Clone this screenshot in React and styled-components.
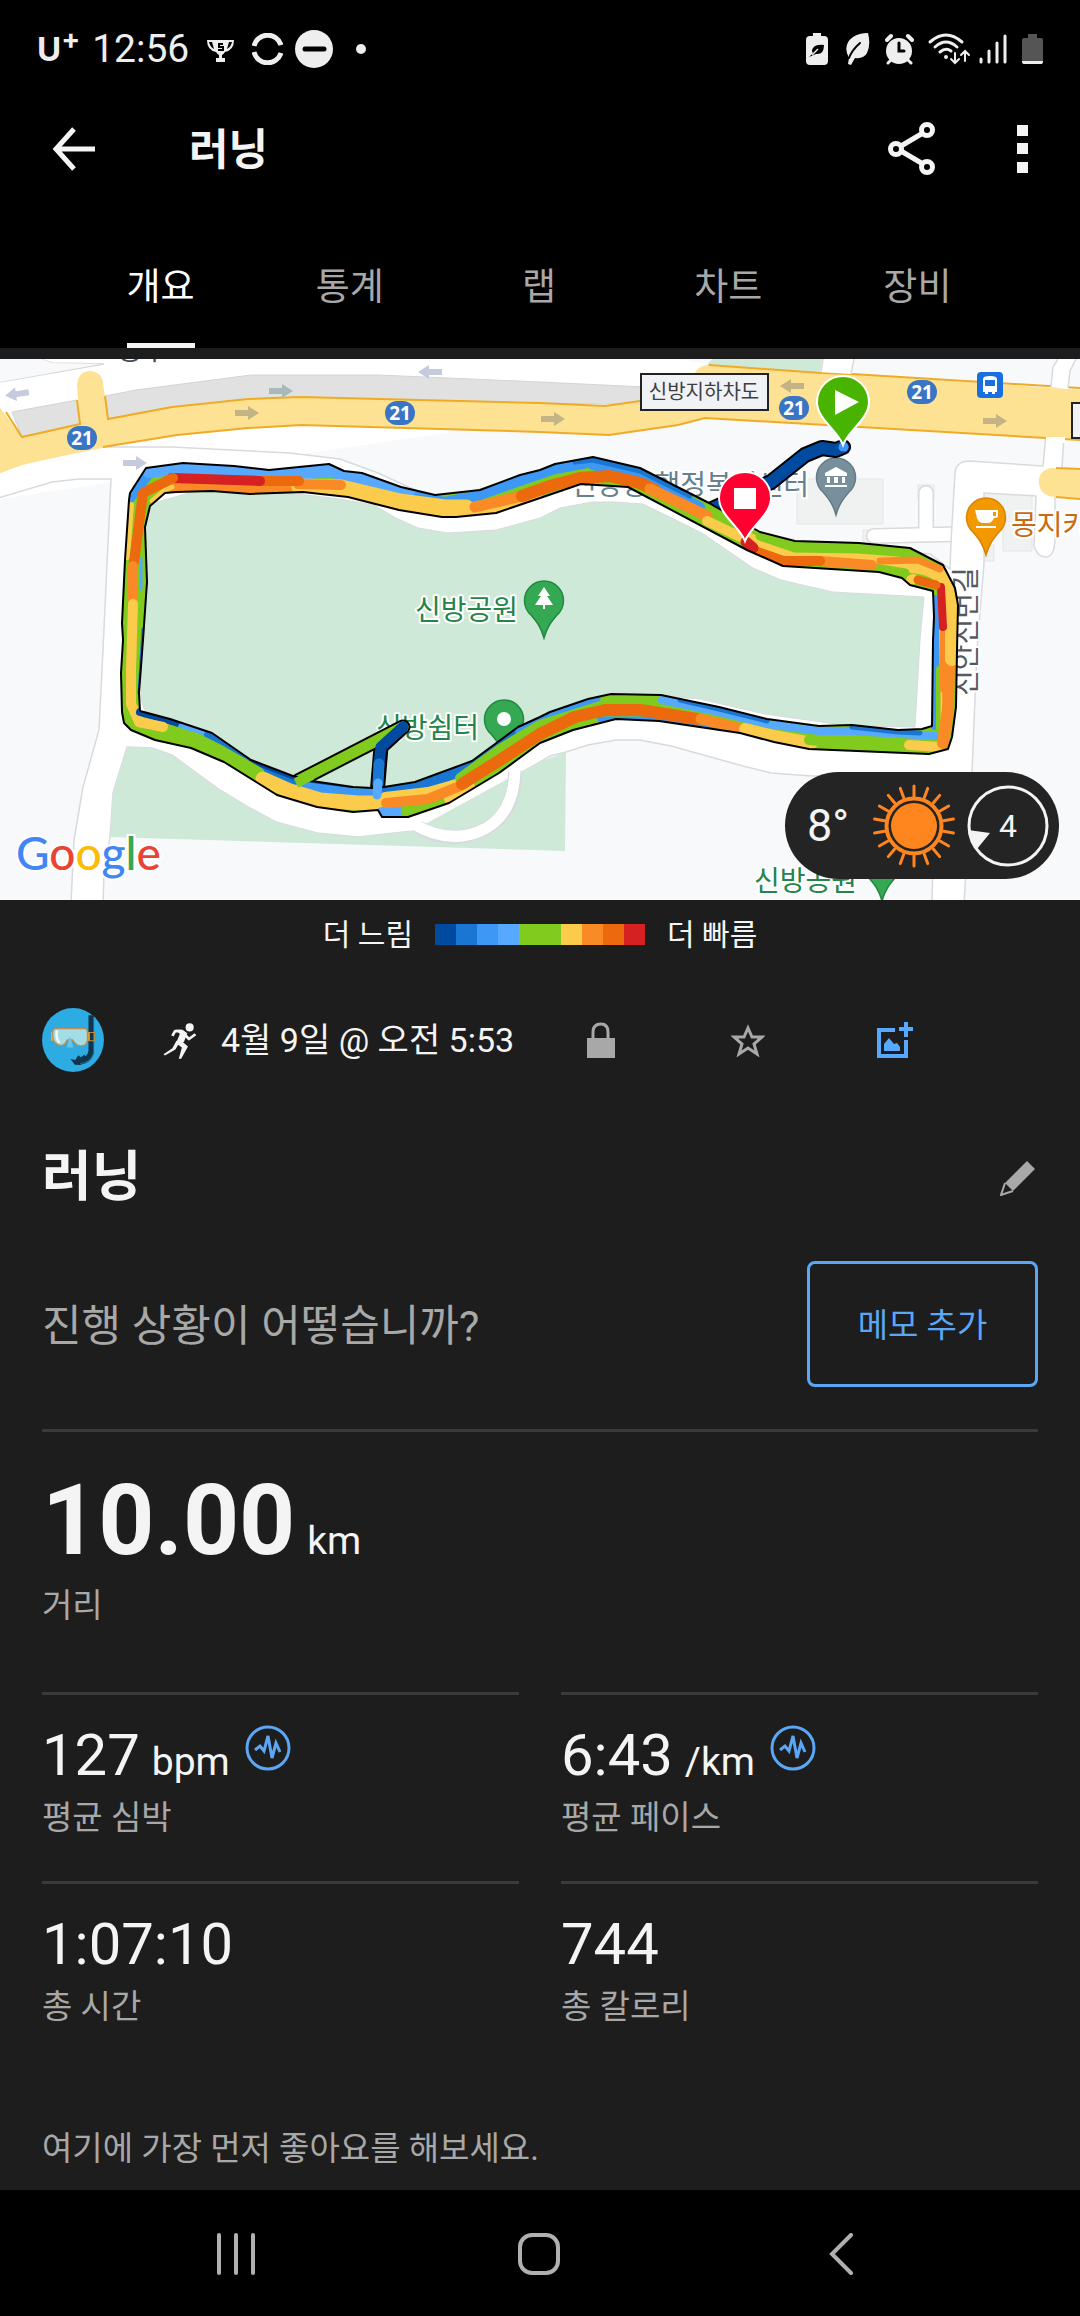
import React, { useState } from "react";
import styled, { createGlobalStyle } from "styled-components";

const PACE = {
   navy: "#004a9f",
   blue: "#1976d2",
   azure: "#3d97f4",
   sky: "#56a9ff",
   green: "#81ca1e",
   yellow: "#fbcb4c",
   orange: "#fa8a26",
   amber: "#ec690d",
   red: "#d52121",
};

const LEGEND = ["navy", "blue", "azure", "sky", "green", "green", "yellow", "orange", "amber", "red"];

const TABS = ["개요", "통계", "랩", "차트", "장비"];

const STATS = [
   { value: "127", unit: "bpm", label: "평균 심박", chart: true },
   { value: "6:43", unit: "/km", label: "평균 페이스", chart: true },
   { value: "1:07:10", label: "총 시간" },
   { value: "744", label: "총 칼로리" },
];

/* ---------- map data ---------- */

const OUTER =
   "M130 134 146 109 183 104 234 107 269 111 329 105 344 112 362 114 401 128 435 136 480 131 520 116 540 111 555 105 593 98 640 109 709 144 760 173 795 182 859 184 910 189 943 206 955 229 958 246 957 291 956 348 952 378 948 390 929 395 809 390 774 383 740 374 659 362 616 360 573 371 540 384 499 414 449 444 408 458 382 458 378 451 353 453 317 448 277 436 224 403 191 389 155 381 131 371 124 364 122 353 121 314 123 281 122 264 125 201 129 141Z";
const INNER =
   "M165 134 150 147 145 168 147 223 143 281 139 334 140 352 170 360 212 374 251 401 293 417 312 422 353 428 372 429 384 428 415 423 472 402 518 368 540 358 550 353 588 340 611 335 661 336 719 348 767 360 819 367 852 366 898 371 922 370 932 367 933 281 934 258 933 232 910 226 902 219 879 213 783 207 747 191 628 128 581 125 540 139 496 154 456 158 442 158 399 151 348 138 303 133 250 135 212 132 176 133Z";

// [pace, width, points], painted in order
const SEGMENTS = [
   ["azure", 12, "128 140 149 113"],
   ["sky", 14, "149 112 183 108 234 111 269 117 330 111 362 120 401 135 435 142"],
   ["azure", 10, "418 138 445 143 480 136 520 122 555 110 593 103"],
   ["azure", 10, "593 106 640 116 700 148"],
   ["blue", 5, "575 103 593 101 640 112 690 137"],
   ["orange", 14, "172 130 212 127 250 130 297 129"],
   ["yellow", 5, "152 142 165 131 172 128"],
   ["yellow", 17, "300 128 341 129 400 143 445 149 466 149"],
   ["yellow", 5, "456 156 496 151 540 137"],
   ["yellow", 6, "131 146 127 198"],
   ["orange", 10, "298 125 341 126"],
   ["amber", 10, "260 122 299 122"],
   ["red", 10, "172 119 260 122"],
   ["amber", 10, "173 119 143 134 139 165 134 203"],
   ["orange", 10, "133 207 133 240"],
   ["yellow", 10, "133 245 131 310 131 345 139 363 165 368"],
   ["orange", 11, "475 148 522 137"],
   ["amber", 12, "522 137 550 127 580 119 610 117 640 124 655 131"],
   ["orange", 11, "650 130 680 144 707 157"],
   ["yellow", 10, "707 162 745 180"],
   ["yellow", 11, "745 178 795 195"],
   ["sky", 3, "141 200 141 230"],
   ["blue", 3, "143 270 139 334"],
   ["navy", 8, "140 353 175 363 190 368"],
   ["sky", 8, "182 368 212 378"],
   ["blue", 8, "208 376 250 405 300 424"],
   ["navy", 5, "251 402 293 418 350 429"],
   ["azure", 9, "300 427 355 434 380 433"],
   ["green", 14, "150 374 169 373 196 381 220 393 258 415"],
   ["yellow", 10, "139 363 163 368"],
   ["yellow", 15, "263 420 290 432 320 441 358 444 385 444"],
   ["blue", 12, "386 432 415 428 472 407 515 374"],
   ["azure", 10, "520 371 550 357 600 340"],
   ["yellow", 8, "385 437 428 432 460 423"],
   ["sky", 12, "382 454 400 453"],
   ["green", 12, "407 452 449 440"],
   ["yellow", 10, "449 440 470 428"],
   ["orange", 10, "386 444 428 440 460 427"],
   ["green", 10, "460 419 500 390 540 366 600 347"],
   ["green", 12, "606 341 656 342"],
   ["sky", 8, "662 341 719 353 767 365 819 372 852 372 935 377"],
   ["blue", 5, "680 341 719 350 767 362"],
   ["blue", 5, "852 368 898 373 920 374"],
   ["azure", 5, "600 360 659 360 720 371"],
   ["amber", 12, "462 425 500 401 540 375 575 358 605 351 640 351 697 360"],
   ["orange", 11, "701 360 742 370"],
   ["yellow", 12, "745 370 774 377 812 384"],
   ["green", 10, "809 381 850 384 905 388"],
   ["azure", 8, "935 367 935 240"],
   ["green", 6, "939 370 939 310"],
   ["yellow", 5, "943 380 943 330 941 240"],
   ["yellow", 10, "909 386 940 388"],
   ["orange", 12, "943 384 948 350 949 302"],
   ["orange", 8, "944 330 944 270"],
   ["yellow", 14, "952 300 952 250 946 228 938 214 905 202 840 197 800 196"],
   ["yellow", 9, "884 206 930 212 945 226"],
   ["red", 8, "941 228 943 268"],
   ["green", 9, "760 177 795 189 859 190 910 194 930 204"],
   ["orange", 7, "880 202 918 201 940 210"],
   ["green", 9, "874 209 905 214"],
   ["yellow", 10, "911 221 913 220"],
   ["amber", 9, "918 221 936 226"],
   ["orange", 10, "820 202 872 206"],
   ["amber", 10, "749 190 783 202 820 202"],
   ["red", 11, "746 183 753 189"],
];

const ROUTE_BADGES = [[82, 79], [400, 54], [794, 49], [922, 33]];

// [x, y, rotation, colour]
const ROAD_ARROWS = [
   [17, 35, 172, "#c5cbdd"],
   [281, 32, 0, "#a7bab9"],
   [247, 54, 0, "#c3b385"],
   [430, 13, 180, "#c5cbdd"],
   [135, 104, 0, "#c5cbdd"],
   [553, 60, 0, "#c3b385"],
   [792, 27, 180, "#c3b385"],
   [995, 62, 0, "#c3b385"],
];

const Pin = ({ x, y, fill, edge, children }) => (
   <g transform={`translate(${x} ${y})`}>
      <path
         d="M0 38C-3 27-7 22-13 15A19.500 19.500 0 1 1 13 15C7 22 3 27 0 38Z"
         fill={fill}
         stroke={edge}
         strokeWidth="1.500"
      />
      {children}
   </g>
);

const FlagPin = ({ x, y, fill, children }) => (
   <g transform={`translate(${x} ${y})`}>
      <path
         d="M0 43C-5 29-26 17-26 0A26 26 0 1 1 26 0C26 17 5 29 0 43Z"
         fill={fill}
         stroke="#fff"
         strokeWidth="2"
      />
      {children}
   </g>
);

const Tree = () => <path d="M0-13 6-4H3L9 5H1V9H-1V5H-9L-3-4H-6Z" fill="#fff" />;

const RouteMap = () => (
   <MapSvg viewBox="0 0 1080 541" role="img" aria-label="러닝 경로 지도">
      <defs>
         <clipPath id="ring">
            <path d={OUTER + INNER} clipRule="evenodd" />
         </clipPath>
      </defs>
      <rect width="1080" height="541" fill="#f8f9fb" />

      {/* small buildings */}
      <g fill="#f0f1f1" stroke="#e4e5e6">
         <path d="M797 120H883V165H797Z" />
         <path d="M984 134H1032V192H1003V155H984ZM978 186H994V202H978Z" />
         <path d="M918 126H934V140H918ZM863 171H873V184H863Z" />
      </g>

      {/* side roads */}
      <g fill="none" strokeLinecap="round">
         <path d="M874 177 962 175M926 134V175" stroke="#d9dadd" strokeWidth="16" />
         <path d="M874 177 962 175M926 134V175" stroke="#fff" strokeWidth="13" />
      </g>

      {/* upper carriageway */}
      <path
         d="M0 0H678L712 6 700 40 540 60 0 140V23L100 5 52 4 41 0H0Z"
         fill="#fff"
      />
      <path d="M41 0 52 4 104 5 0 23" fill="#f8f9fb" stroke="#d9dadd" strokeWidth="1.500" />
      <path d="M0 0H41L52 4 100 5 0 23Z" fill="#f8f9fb" />

      {/* loop road round the park */}
      <path
         d="M-2 90 107 88 172 88 290 94 340 100 378 114 413 130 440 140 500 125 560 112 600 110 640 130 700 160 745 180 850 188 930 195 950 210 951 183 955 114 Q956 102 970 102L1043 107 1046 75H1064L1062 109 1082 110V140L1055 137V181Q1054 198 1046 198 1037 198 1034 187L1036 137 984 134 984 204 977 291 972 413 964 545H932L935 417 812 417 771 414 743 407 671 387 640 381 616 381 588 386 566 393 550 397 540 403 429 464 413 472 358 478 317 474 276 463 248 448 220 431 172 396 152 389 127 388 113 434 110 478 104 514 103 545H71L74 481 83 428 99 371 103 291 111 120 79 120 52 123-2 139Z"
         fill="#fff"
         stroke="#d9dadd"
         strokeWidth="1.500"
      />
      <path
         d="M127 388 152 389 172 396 220 431 248 448 276 463 317 474 358 478 413 472 540 403 566 393 565 492 110 478 113 434Z"
         fill="#cfe9d8"
      />
      <g fill="none">
         <path d="M418 468Q446 485 478 473 516 458 515 412" stroke="#d9dadd" strokeWidth="14" />
         <path d="M412 464Q446 485 478 473 516 458 515 405" stroke="#fff" strokeWidth="11" />
      </g>
      <path
         d="M140 160 150 145 200 131 280 133 340 140 374 146 396 159 418 169 448 174 496 171 540 159 560 149 592 143 615 143 643 145 702 174 753 209 781 221 833 233 924 238 920 281 915 368 850 367 765 355 700 340 610 333 560 355 510 385 455 412 410 425 380 430 320 424 250 400 200 370 145 352 141 340Z"
         fill="#cfe9d8"
         stroke="#d9dadd"
      />

      {/* medians and the main road */}
      <path d="M12 53 77 41 80 65 22 78ZM105 37 136 31 251 16 379 16 540 23 645 28V45H605L540 44 300 38 248 40 172 48 108 60Z" fill="#e1e1e1" stroke="#d3d4d6" />
      <path d="M712 0H822L820 14 705 8Z" fill="#cfe9d8" />
      <path
         d="M-2 46 22 78 80 65 77 26A13 13 0 0 1 103 24L108 60 172 48 248 40 300 38 540 44 605 47 640 43 694 30Q690 7 709 6L821 14 852 15 1082 31V81L705 59 678 66 609 76 540 73 301 66 248 69 177 76 107 88 67 96 22 106-2 115Z"
         fill="#fee293"
      />
      <path d="M1082 110 1052 109Q1038 111 1039 124 1040 137 1055 138L1082 140Z" fill="#fee293" />
      <g fill="none" stroke="#f0ab26" strokeWidth="2">
         <path d="M6 53 22 78 80 65 77 41M105 37 108 60 172 48 248 40 300 38 540 44 605 47 640 42M709 6 821 14 852 15 1080 29" />
         <path d="M103 88 177 76 248 69 301 66 540 73 609 76 678 66 705 59 1080 81M1056 138 1080 140M1056 109 1080 110" />
      </g>
      <path d="M823 0H853L851 15 821 13ZM1051 28 1053 8 1060-2H1076L1069 12 1068 30ZM1046 78H1065V84H1046Z" fill="#fff" />
      <path d="M823 0 821 13M854 0 851 15M1051 28 1053 8 1058 0M1068 29 1070 12 1076 0" fill="none" stroke="#d9dadd" strokeWidth="1.500" />

      {ROAD_ARROWS.map(([x, y, r, fill]) => (
         <path
            key={`${x}-${y}`}
            d="M-12-3H1V-7L12 0 1 7V3H-12Z"
            fill={fill}
            transform={`translate(${x} ${y}) rotate(${r})`}
         />
      ))}
      {ROUTE_BADGES.map(([x, y]) => (
         <g key={x}>
            <rect x={x - 15} y={y - 12} width="30" height="24" rx="12" fill="#3a75c4" />
            <BadgeText x={x} y={y + 7}>21</BadgeText>
         </g>
      ))}

      <MapText x="116" y="1" $color="#4a4e54">청수로</MapText>
      <rect x="641" y="15" width="127" height="36" fill="#f1f2f5" stroke="#222" strokeWidth="2" />
      <BoxText x="704" y="40">신방지하차도</BoxText>
      <rect x="1072" y="44" width="40" height="35" fill="#f1f2f5" stroke="#222" strokeWidth="2" />

      <rect x="977" y="13" width="26" height="26" rx="4" fill="#1a6fe0" />
      <path
         d="M983 20Q983 17 990 17T997 20V33H995V35H992V33H988V35H985V33H983ZM985 21V27H995V21Z"
         fill="#fff"
         fillRule="evenodd"
      />

      <MapText x="415" y="261" $color="#24844a">신방공원</MapText>
      <MapText x="376" y="379" $color="#24844a">신방쉼터</MapText>
      <MapText x="754" y="532" $color="#24844a">신방공원</MapText>
      <MapText x="571" y="136" $color="#66808f">신방동 행정복지센터</MapText>
      <MapText x="1011" y="176" $color="#c76a14">몽지카</MapText>
      <MapText x="-337" y="976" $color="#555a60" transform="rotate(-90)">신안신번길</MapText>

      <Pin x={544} y={241} fill="#34a853" edge="#23883f"><Tree /></Pin>
      <Pin x={504} y={360} fill="#34a853" edge="#23883f"><circle r="7" fill="#fff" /></Pin>
      <Pin x={882} y={504} fill="#34a853" edge="#23883f"><Tree /></Pin>
      <Pin x={836} y={118} fill="#78909c" edge="#647c88">
         <path d="M0-10 11-4V-1H-11V-4ZM-9 0H-6V6H-9ZM-2 0H2V6H-2ZM6 0H9V6H6ZM-11 8H11V10H-11Z" fill="#fff" />
      </Pin>
      <Pin x={986} y={158} fill="#f29900" edge="#d98300">
         <path d="M-11-7H12V-1Q12 1 8 1 6 6 2 6H-4Q-8 5-9 1ZM7-5V-1H10V-5ZM-10 9H10V11H-10Z" fill="#fff" fillRule="evenodd" />
      </Pin>

      {/* connectors to the lap */}
      <g fill="none" strokeLinecap="round" strokeLinejoin="round">
         <path d="M843 88 836 91 822 89 805 96 771 123 712 150" stroke="#000" strokeWidth="16" />
         <path d="M843 88 836 91 822 89 805 96 771 123 712 150" stroke={PACE.navy} strokeWidth="12" />
         <path d="M844 88 843 88" stroke={PACE.azure} strokeWidth="9" />
         <path d="M403 368 298 422M403 368 381 388 377 436" stroke="#000" strokeWidth="15" />
         <path d="M403 368 298 422" stroke={PACE.green} strokeWidth="11" />
         <path d="M403 368 381 388 379 405" stroke={PACE.navy} strokeWidth="11" />
         <path d="M379 405 378 425" stroke={PACE.blue} strokeWidth="11" />
      </g>

      {/* the lap itself */}
      <path d={OUTER + INNER} fill={PACE.green} fillRule="evenodd" />
      <g clipPath="url(#ring)" fill="none" strokeLinecap="round" strokeLinejoin="round">
         {SEGMENTS.map(([pace, width, points], index) => (
            <polyline key={index} points={points} stroke={PACE[pace]} strokeWidth={width} />
         ))}
      </g>
      <path d={OUTER + INNER} fill="none" stroke="#000" strokeWidth="2" strokeLinejoin="round" />
      <path d="M378 424 377 436" stroke={PACE.sky} strokeWidth="9" strokeLinecap="round" />
      <path d="M312 416 296 424" stroke={PACE.green} strokeWidth="10" />

      <FlagPin x={843} y={43} fill="#48b400"><path d="M-8-12V13L16 0Z" fill="#fff" /></FlagPin>
      <FlagPin x={745} y={139} fill="#ff0030"><rect x="-11" y="-10" width="22" height="21" fill="#fff" /></FlagPin>

      <LogoText x="16" y="511">
         <tspan fill="#4285f4">G</tspan>
         <tspan fill="#ea4335">o</tspan>
         <tspan fill="#fbbc05">o</tspan>
         <tspan fill="#4285f4">g</tspan>
         <tspan fill="#34a853">l</tspan>
         <tspan fill="#ea4335">e</tspan>
      </LogoText>
   </MapSvg>
);

/* ---------- icons ---------- */

const StatusLeftIcons = () => (
   <>
      <svg width="33" height="32" viewBox="0 0 33 32" fill="#eee">
         <path d="M0 7H27Q27 17 18 19 16 22 15 22V25H18V29H9V25H12V22Q11 22 9 19 0 17 0 7ZM2 9Q3 14 7 16L5 9ZM25 9H22L20 16Q24 14 25 9Z" fillRule="evenodd" />
         <path d="M16 11H12V14H16V17H11" fill="none" stroke="#000" strokeWidth="2" />
      </svg>
      <svg width="31" height="32" viewBox="0 0 31 32" fill="none" stroke="#eee" strokeWidth="5">
         <path d="M2 13A14 14 0 0 1 29 12M2 19A14 14 0 0 0 29 20" />
      </svg>
      <svg width="38" height="38" viewBox="0 0 38 38">
         <circle cx="19" cy="19" r="19" fill="#eee" />
         <path d="M10 19H29" stroke="#000" strokeWidth="5" strokeLinecap="round" />
      </svg>
      <svg width="34" height="32" viewBox="0 0 34 32">
         <circle cx="16" cy="16" r="5" fill="#eee" />
      </svg>
   </>
);

const StatusRightIcons = () => (
   <>
      <svg width="25" height="32" viewBox="0 0 25 32">
         <path d="M9 0H17V3H20Q24 3 24 7V28Q24 32 20 32H6Q2 32 2 28V7Q2 3 6 3H9Z" fill="#eee" />
         <path d="M20 12Q12 11 9 15 7 18 9 20L5 24 12 21Q20 22 20 12Z" fill="#000" />
         <path d="M8 22 14 16" stroke="#eee" strokeWidth="1.500" />
      </svg>
      <svg width="26" height="32" viewBox="0 0 26 32">
         <path d="M24 0Q27 12 23 20 20 26 11 25L7 32 4 31 5 25Q-2 12 9 4 15 0 24 0Z" fill="#eee" />
         <path d="M16 10Q8 17 5 25" stroke="#000" strokeWidth="2" fill="none" strokeLinecap="round" />
      </svg>
      <svg width="29" height="32" viewBox="0 0 29 32" fill="none" stroke="#eee" strokeLinecap="round">
         <circle cx="14" cy="18" r="13" fill="#eee" stroke="none" />
         <path d="M2 7 6 3M23 3 27 7" strokeWidth="4" />
         <path d="M6 27 3 30M23 27 26 30" strokeWidth="3" />
         <path d="M14 10V18H19" stroke="#000" strokeWidth="3" />
      </svg>
      <svg width="35" height="32" viewBox="0 0 35 32" fill="none" stroke="#eee" strokeWidth="3" strokeLinecap="round" overflow="visible">
         <path d="M1 9Q17-5 33 9M6 14Q17 4 28 14M11 19Q17 14 22 18" />
         <circle cx="17" cy="24" r="2" fill="#eee" stroke="none" />
         <path d="M26 20V29M22 26 26 30 30 26M36 28V19M32 22 36 18 40 22" strokeWidth="2" />
      </svg>
      <svg width="28" height="32" viewBox="0 0 28 32" stroke="#eee" strokeWidth="3" strokeLinecap="round">
         <path d="M2 26V29M10 18V29M18 10V29M26 3V29" />
      </svg>
      <svg width="21" height="32" viewBox="0 0 21 32">
         <path d="M6 1H15V5H19Q21 5 21 7V29Q21 31 19 31H2Q0 31 0 29V7Q0 5 2 5H6Z" fill="#555" />
         <path d="M0 28H21Q21 31 19 31H2Q0 31 0 28Z" fill="#eee" />
      </svg>
   </>
);

const BackArrow = () => (
   <svg width="44" height="44" viewBox="0 0 44 44" fill="none" stroke="#f4f4f4" strokeWidth="5">
      <path d="M22 2 4 22 22 42M4 22H43" />
   </svg>
);

const ShareIcon = () => (
   <svg width="48" height="54" viewBox="0 0 48 54" fill="none" stroke="#f4f4f4" strokeWidth="5">
      <path d="M13 24 35 11M13 29 35 42" />
      <circle cx="8" cy="27" r="5.500" />
      <circle cx="39" cy="8" r="5.500" />
      <circle cx="39" cy="45" r="5.500" />
   </svg>
);

const MoreIcon = () => (
   <svg width="11" height="48" viewBox="0 0 11 48" fill="#f4f4f4">
      <path d="M0 0H11V11H0ZM0 18H11V29H0ZM0 37H11V48H0Z" />
   </svg>
);

const AvatarArt = () => (
   <svg width="62" height="64" viewBox="125 147 180 186">
      <ellipse cx="215" cy="240" rx="90" ry="93" fill="#2cace3" />
      <path d="M268 168V272Q264 300 232 304" fill="none" stroke="#0d3550" strokeWidth="16" />
      <path d="M208 295 222 298 230 284 238 290 248 282 258 296 236 313 220 312Z" fill="#0d3550" />
      <path d="M275 172V278Q266 306 236 309" fill="none" stroke="#2b6a8c" strokeWidth="3" />
      <path d="M151 217H160V242H151ZM254 217H264V242H254Z" fill="#f6a723" />
      <path d="M262 218H277V242H262Z" fill="none" stroke="#c98a33" strokeWidth="3" />
      <path
         d="M162 207H250Q257 208 257 220V240Q255 256 240 257 225 258 214 240H198Q190 258 178 256 158 252 156 230V218Q156 208 162 207Z"
         fill="#a3dde6"
         stroke="#c08b52"
         strokeWidth="4"
      />
      <path d="M168 212Q164 235 176 248" fill="none" stroke="#f1fbfd" strokeWidth="7" />
      <path d="M197 262 204 233H208L216 262Z" fill="#6cc4e2" />
   </svg>
);

const RunIcon = () => (
   <svg width="36" height="39" viewBox="470 180 105 115" fill="none" stroke="#f4f4f4" strokeLinejoin="round">
      <circle cx="551" cy="199" r="12" fill="#f4f4f4" stroke="none" />
      <path d="M510 206 530 206 544 216 534 242 512 243 522 218Z" fill="#f4f4f4" stroke="none" />
      <path d="M500 224 508 210H526M536 220 549 233 568 219" strokeWidth="8" />
      <path d="M512 238 528 240 546 255 526 291 519 291 528 258 517 250 509 264 478 282 474 278 500 260Z" fill="#f4f4f4" stroke="none" />
   </svg>
);

const LockIcon = () => (
   <svg width="28" height="36" viewBox="0 0 28 36">
      <path d="M6 18V10Q6 2 14 2 21 2 21 10V18" fill="none" stroke="#a8a8a8" strokeWidth="3" />
      <path d="M0 16H28V36H0Z" fill="#a8a8a8" />
   </svg>
);

const StarIcon = () => (
   <svg width="34" height="33" viewBox="0 0 34 33">
      <path
         d="M17 4 21 13H31L23 20 26 30 17 24 8 30 11 20 3 13H13Z"
         fill="none"
         stroke="#a8a8a8"
         strokeWidth="3"
      />
   </svg>
);

const AddPhotoIcon = () => (
   <svg width="36" height="36" viewBox="0 0 36 36" fill="#56a9ff">
      <path d="M18 8H2V34H29V18" fill="none" stroke="#56a9ff" strokeWidth="4" />
      <path d="M22 7H36M29 0V15" stroke="#56a9ff" strokeWidth="4" />
      <path d="M7 29V22L12 16 17 22 20 21 23 25V29Z" />
   </svg>
);

const PencilIcon = () => (
   <svg width="35" height="35" viewBox="0 0 35 35">
      <path d="M27 0 35 8 13 30 5 22Z" fill="#a8a8a8" />
      <path d="M5 22 1 34 13 30" fill="none" stroke="#a8a8a8" strokeWidth="2" />
   </svg>
);

const ChartIcon = () => (
   <svg width="46" height="46" viewBox="0 0 46 46" fill="none" stroke="#5ba7f5" strokeWidth="3">
      <circle cx="23" cy="23" r="21" />
      <path d="M10 25 15 21 19 26 23 11 27 33 31 18 35 27" />
   </svg>
);

const SunIcon = () => (
   <svg width="82" height="84" viewBox="-41 -42 82 84">
      <circle r="23" fill="#ff861f" />
      <circle r="27.500" fill="none" stroke="#ff861f" strokeWidth="4" />
      {Array.from({ length: 18 }, (_, i) => (
         <path key={i} d="M0-30V-40" stroke="#ff861f" strokeWidth="3" strokeLinecap="round" transform={`rotate(${i * 20})`} />
      ))}
   </svg>
);

/* ---------- page ---------- */

const App = () => {
   const [activeTab, setActiveTab] = useState("개요");

   return (
      <>
         <GlobalStyle />
         <Screen>
            <StatusBar>
               <StatusGroup>
                  <Carrier>
                     U<sup>+</sup>
                  </Carrier>
                  <Clock>12:56</Clock>
                  <StatusLeftIcons />
               </StatusGroup>
               <StatusGroup $gap={15}>
                  <StatusRightIcons />
               </StatusGroup>
            </StatusBar>

            <AppBar>
               <IconButton aria-label="뒤로">
                  <BackArrow />
               </IconButton>
               <AppTitle>러닝</AppTitle>
               <AppActions>
                  <IconButton aria-label="공유">
                     <ShareIcon />
                  </IconButton>
                  <IconButton aria-label="더보기">
                     <MoreIcon />
                  </IconButton>
               </AppActions>
            </AppBar>

            <Tabs role="tablist">
               {TABS.map((tab) => (
                  <Tab
                     key={tab}
                     role="tab"
                     aria-selected={tab === activeTab}
                     $active={tab === activeTab}
                     onClick={() => setActiveTab(tab)}
                  >
                     <span>{tab}</span>
                  </Tab>
               ))}
            </Tabs>

            <MapArea>
               <RouteMap />
               <Weather>
                  <Temperature>8°</Temperature>
                  <SunIcon />
                  <Wind>
                     <svg width="82" height="82" viewBox="0 0 82 82">
                        <circle cx="41" cy="41" r="39" fill="none" stroke="#f4f4f4" strokeWidth="3" />
                        <path d="M1 45 23 48 10 64Q3 56 1 45Z" fill="#f4f4f4" />
                     </svg>
                     <span>4</span>
                  </Wind>
               </Weather>
            </MapArea>

            <Legend>
               <span>더 느림</span>
               <LegendBar>
                  {LEGEND.map((pace, index) => (
                     <LegendStep key={index} $color={PACE[pace]} />
                  ))}
               </LegendBar>
               <span>더 빠름</span>
            </Legend>

            <Details>
               <InfoRow>
                  <AvatarArt />
                  <Activity>
                     <RunIcon />
                     <span>4월 9일 @ 오전 5:53</span>
                  </Activity>
                  <InfoActions>
                     <IconButton $width={64} aria-label="공개 범위">
                        <LockIcon />
                     </IconButton>
                     <IconButton $width={64} aria-label="즐겨찾기">
                        <StarIcon />
                     </IconButton>
                     <IconButton $width={64} aria-label="사진 추가">
                        <AddPhotoIcon />
                     </IconButton>
                  </InfoActions>
               </InfoRow>

               <TitleRow>
                  <h2>러닝</h2>
                  <IconButton aria-label="이름 편집">
                     <PencilIcon />
                  </IconButton>
               </TitleRow>

               <NoteRow>
                  <p>진행 상황이 어떻습니까?</p>
                  <NoteButton>메모 추가</NoteButton>
               </NoteRow>

               <Distance>
                  <ValueRow>
                     <BigValue>10.00</BigValue>
                     <Unit>km</Unit>
                  </ValueRow>
                  <Label>거리</Label>
               </Distance>

               <StatGrid>
                  {STATS.map((stat) => (
                     <Stat key={stat.label}>
                        <ValueRow>
                           <Value>{stat.value}</Value>
                           {stat.unit && <Unit>{stat.unit}</Unit>}
                           {stat.chart && (
                              <ChartButton aria-label={`${stat.label} 차트`}>
                                 <ChartIcon />
                              </ChartButton>
                           )}
                        </ValueRow>
                        <Label>{stat.label}</Label>
                     </Stat>
                  ))}
               </StatGrid>

               <LikeHint>여기에 가장 먼저 좋아요를 해보세요.</LikeHint>
            </Details>

            <NavBar>
               <IconButton $width={60} aria-label="최근 앱">
                  <svg width="38" height="42" viewBox="0 0 38 42" stroke="#b0b0b0" strokeWidth="4" strokeLinecap="round">
                     <path d="M2 2V40M19 2V40M36 2V40" />
                  </svg>
               </IconButton>
               <IconButton $width={60} aria-label="홈">
                  <svg width="42" height="42" viewBox="0 0 42 42" fill="none" stroke="#b0b0b0" strokeWidth="4">
                     <rect x="2" y="2" width="38" height="38" rx="12" />
                  </svg>
               </IconButton>
               <IconButton $width={60} aria-label="이전">
                  <svg width="24" height="42" viewBox="0 0 24 42" fill="none" stroke="#b0b0b0" strokeWidth="4" strokeLinecap="round">
                     <path d="M22 2 3 21 22 40" />
                  </svg>
               </IconButton>
            </NavBar>
         </Screen>
      </>
   );
};

export default App;

const GlobalStyle = createGlobalStyle`
   * {
      box-sizing: border-box;
      margin: 0;
      padding: 0;
   }

   body {
      background: #1d1d1d;
      color: #f4f4f4;
      font-family: Roboto, "Noto Sans CJK KR", sans-serif;
   }

   button {
      background: none;
      border: none;
      color: inherit;
      font: inherit;
      cursor: pointer;
   }

   svg {
      display: block;
      flex-shrink: 0;
   }
`;

const Screen = styled.div`
   min-height: 100vh;
   display: flex;
   flex-direction: column;
`;

const StatusBar = styled.header`
   display: flex;
   justify-content: space-between;
   align-items: center;
   height: 97px;
   padding: 0 37px;
   background: #000;
`;

const StatusGroup = styled.div`
   display: flex;
   align-items: center;
   gap: ${({ $gap }) => $gap || 12}px;
`;

const Carrier = styled.span`
   display: flex;
   font-family: Inter, sans-serif;
   font-size: 33px;
   font-weight: 700;
   line-height: 52px;
   color: #eee;

   sup {
      font-size: 28px;
      line-height: 32px;
   }
`;

const Clock = styled.span`
   margin-right: 6px;
   font-size: 39px;
   line-height: 48px;
   color: #eee;
`;

const AppBar = styled.div`
   display: flex;
   align-items: center;
   height: 103px;
   padding: 0 52px;
   background: #000;
`;

const IconButton = styled.button`
   display: flex;
   justify-content: center;
   align-items: center;
   ${({ $width }) => $width && `width: ${$width}px;`}
`;

const AppTitle = styled.h1`
   margin-left: 93px;
   padding-top: 2px;
   font-size: 43px;
   font-weight: 700;
   line-height: 56px;
`;

const AppActions = styled.div`
   display: flex;
   align-items: center;
   gap: 81px;
   margin-left: auto;
`;

const Tabs = styled.nav`
   display: grid;
   grid-template-columns: repeat(5, 1fr);
   padding: 0 68px 0 66px;
   background: #000;
`;

const Tab = styled.button`
   display: flex;
   justify-content: center;
   padding-top: 64px;
   font-size: 37px;
   line-height: 48px;
   color: ${({ $active }) => ($active ? "#fff" : "#a8a8a8")};

   span {
      padding-bottom: 31px;
      border-bottom: 5px solid ${({ $active }) => ($active ? "#f4f4f4" : "transparent")};
   }
`;

const MapArea = styled.section`
   position: relative;
   margin-top: 11px;
`;

const MapSvg = styled.svg`
   width: 100%;
   height: auto;
`;

const MapText = styled.text`
   font-family: "Noto Sans CJK KR", sans-serif;
   font-size: 28px;
   font-weight: 400;
   fill: ${({ $color }) => $color};
   stroke: #fff;
   stroke-width: 4px;
   stroke-linejoin: round;
   paint-order: stroke;
`;

const BoxText = styled.text`
   font-family: "Noto Sans CJK KR", sans-serif;
   font-size: 20px;
   fill: #3c4043;
   text-anchor: middle;
`;

const BadgeText = styled.text`
   font-family: "Noto Sans", sans-serif;
   font-size: 19px;
   font-weight: 700;
   fill: #fff;
   text-anchor: middle;
`;

const LogoText = styled.text`
   font-family: Lato, sans-serif;
   font-size: 46px;
   font-weight: 500;
   stroke: #fff;
   stroke-width: 4px;
   paint-order: stroke;
`;

const Weather = styled.div`
   position: absolute;
   right: 21px;
   bottom: 21px;
   display: flex;
   align-items: center;
   gap: 12px;
   height: 107px;
   padding: 0 10px 0 22px;
   border-radius: 54px;
   background: #242424;
`;

const Temperature = styled.span`
   width: 54px;
   font-size: 45px;
   line-height: 54px;
`;

const Wind = styled.div`
   display: grid;
   place-items: center;
   font-size: 32px;
   line-height: 40px;

   > * {
      grid-area: 1 / 1;
   }
`;

const Legend = styled.div`
   display: flex;
   justify-content: center;
   align-items: center;
   gap: 22px;
   height: 68px;
   font-size: 30px;
   line-height: 40px;

   span {
      padding-top: 2px;
   }
`;

const LegendBar = styled.div`
   display: flex;
`;

const LegendStep = styled.i`
   width: 21px;
   height: 21px;
   background: ${({ $color }) => $color};
`;

const Details = styled.main`
   flex: 1;
   padding: 0 42px;
`;

const InfoRow = styled.div`
   display: flex;
   align-items: center;
   height: 144px;
`;

const Activity = styled.div`
   display: flex;
   align-items: center;
   gap: 23px;
   margin-left: 58px;
   font-size: 34px;
   line-height: 48px;
`;

const InfoActions = styled.div`
   display: flex;
   align-items: center;
   gap: 83px;
   margin-left: auto;
   margin-right: 111px;
`;

const TitleRow = styled.div`
   display: flex;
   justify-content: space-between;
   align-items: center;
   height: 130px;
   padding: 2px 3px 0 0;

   h2 {
      font-size: 54px;
      font-weight: 700;
      line-height: 64px;
   }
`;

const NoteRow = styled.div`
   display: flex;
   justify-content: space-between;
   align-items: center;
   padding: 19px 0 42px;

   p {
      padding-top: 3px;
      font-size: 43px;
      line-height: 56px;
      color: #a8a8a8;
   }
`;

const NoteButton = styled.button`
   width: 231px;
   height: 126px;
   padding-top: 3px;
   border: 3px solid #5ba7f5;
   border-radius: 8px;
   font-size: 33px;
   line-height: 48px;
   color: #5ba7f5;
`;

const Distance = styled.section`
   padding: 33px 0 62px;
   border-top: 3px solid #3a3a3a;
`;

const ValueRow = styled.div`
   display: flex;
   align-items: baseline;
`;

const BigValue = styled.span`
   font-size: 98px;
   font-weight: 700;
   line-height: 112px;
`;

const Value = styled.span`
   font-size: 58px;
   line-height: 68px;
`;

const Unit = styled.span`
   margin-left: 12px;
   font-size: 39px;
   line-height: 48px;
`;

const ChartButton = styled(IconButton)`
   align-self: flex-start;
   margin: 4px 0 0 15px;
`;

const Label = styled.p`
   margin-top: 3px;
   padding-top: 2px;
   font-size: 33px;
   line-height: 48px;
   color: #a8a8a8;
`;

const StatGrid = styled.section`
   display: grid;
   grid-template-columns: 1fr 1fr;
   column-gap: 42px;
`;

const Stat = styled.div`
   height: 189px;
   padding-top: 26px;
   border-top: 3px solid #3a3a3a;
`;

const LikeHint = styled.p`
   padding: 55px 0 15px;
   font-size: 33px;
   line-height: 48px;
   color: #a8a8a8;
`;

const NavBar = styled.nav`
   display: flex;
   justify-content: space-between;
   align-items: center;
   height: 126px;
   padding: 2px 209px 0 206px;
   background: #000;
`;
